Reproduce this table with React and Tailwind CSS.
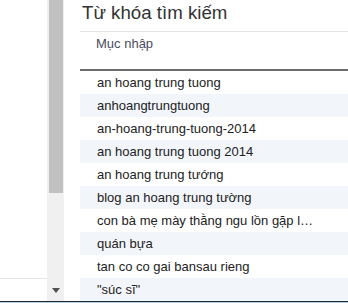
const keywords = [
  "an hoang trung tuong",
  "anhoangtrungtuong",
  "an-hoang-trung-tuong-2014",
  "an hoang trung tuong 2014",
  "an hoang trung tướng",
  "blog an hoang trung tường",
  "con bà mẹ mày thằng ngu lồn gặp l…",
  "quán bựa",
  "tan co co gai bansau rieng",
  "\"súc sĩ\"",
];

function Scrollbar() {
  return (
    <div className="flex w-[17px] flex-col bg-[#f0f0f0]">
      <div className="ml-[2px] h-[193px] w-[14px] bg-[#c1c1c1]" />
      <div className="flex-1" />
      <div className="flex h-[22px] items-center justify-center pl-[1px]">
        <svg width="8" height="5" viewBox="0 0 8 5">
          <path d="M0 0h8L4 5z" fill="#505050" />
        </svg>
      </div>
    </div>
  );
}

function KeywordTable() {
  return (
    <div className="flex-1 pl-[16px] font-['Liberation_Sans',Arial,sans-serif]">
      <div className="h-[32px] border-b border-[#e3e3e3] pl-[2px] pt-[2px] text-[18.7px] leading-[22px] text-[#333]">
        Từ khóa tìm kiếm
      </div>
      <div className="h-[37px] pl-[16px] pt-[4px] text-[13px] leading-[16px] text-[#4b4b5e]">
        Mục nhập
      </div>
      <div className="h-[2px] bg-[#6b6b6b]" />
      {keywords.map((word, i) => (
        <div
          key={word}
          className={
            "h-[23px] whitespace-nowrap pl-[17px] text-[13px] leading-[23px] text-[#222] " +
            (i % 2 === 1 ? "bg-[#f2f5fa]" : "bg-white")
          }
        >
          {word}
        </div>
      ))}
    </div>
  );
}

export default function App() {
  return (
    <div className="flex h-[303px] w-[348px] flex-col overflow-hidden bg-white">
      <div className="flex h-[301px]">
        <div className="flex w-[47px] flex-col">
          <div className="flex-1" />
          <div className="h-[23px] border-t border-[#e5e5e5]" />
        </div>
        <Scrollbar />
        <KeywordTable />
      </div>
      <div className="h-[1px] bg-[#1f2a33]" />
      <div className="h-[1px] bg-[#a9d1ee]" />
    </div>
  );
}
